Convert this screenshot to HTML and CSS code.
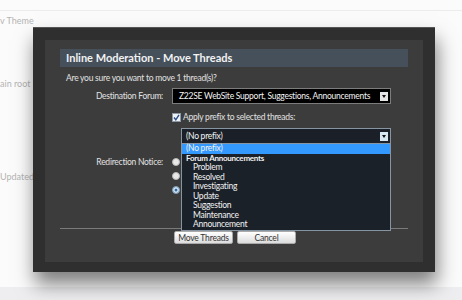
FILE: index.html
```html
<!DOCTYPE html>
<html lang="en">
<head>
    <meta charset="UTF-8">
    <title>Inline Moderation - Move Threads</title>
    <link rel="stylesheet" href="styles.css">
</head>
<body>
    <!-- Page behind the overlay -->
    <div class="page">
        <div class="page-head"></div>
        <div class="page-row theme">v Theme</div>
        <div class="page-row root">ain root</div>
        <div class="page-row updated">Updated:</div>
        <div class="page-foot"></div>
    </div>

    <!-- Move threads dialog -->
    <div class="overlay">
        <div class="panel">
            <h2 class="title">Inline Moderation - Move Threads</h2>
            <p class="question">Are you sure you want to move 1 thread(s)?</p>

            <div class="field">
                <label class="field-label">Destination Forum:</label>
                <div class="select select-dest">
                    <span class="select-text">Z22SE WebSite Support, Suggestions, Announcements</span>
                    <span class="arrow"></span>
                </div>
            </div>

            <div class="field field-check">
                <span></span>
                <label class="check">
                    <svg class="box" width="9" height="9" viewBox="0 0 9 9">
                        <rect x="0.5" y="0.5" width="8" height="8" fill="#eef2f6" stroke="#8d9aa6"/>
                        <path d="M2 4.5 L3.8 6.8 L7 1.8" fill="none" stroke="#2c4f8c" stroke-width="1.4"/>
                    </svg>
                    Apply prefix to selected threads:
                </label>
            </div>

            <div class="field field-prefix">
                <span></span>
                <div class="select select-prefix">
                    <span class="select-text">(No prefix)</span>
                    <span class="arrow arrow-open"></span>
                    <ul class="options">
                        <li class="selected">(No prefix)</li>
                        <li class="group">Forum Announcements</li>
                        <li class="sub">Problem</li>
                        <li class="sub">Resolved</li>
                        <li class="sub">Investigating</li>
                        <li class="sub">Update</li>
                        <li class="sub">Suggestion</li>
                        <li class="sub">Maintenance</li>
                        <li class="sub">Announcement</li>
                    </ul>
                </div>
            </div>

            <div class="field field-radio">
                <label class="field-label">Redirection Notice:</label>
                <div class="radios">
                    <span class="radio"></span>
                    <span class="radio"></span>
                    <span class="radio checked"></span>
                </div>
            </div>

            <div class="actions">
                <button type="submit">Move Threads</button>
                <button type="button">Cancel</button>
            </div>
        </div>
    </div>
</body>
</html>
```

FILE: styles.css
```css
 body {
     margin: 0;
     font-family: Lato, "Liberation Sans", sans-serif;
     background-color: #fbfbfb;
     height: 300px;
     overflow: hidden;
 }
 /* Page behind the dialog */
 .page {
     position: relative;
     height: 300px;
 }
 .page-head {
     height: 10px;
     border-bottom: 1px solid #ececec;
 }
 .page-row {
     color: #b4b4b4;
     font-size: 9px;
     line-height: 12px;
 }
 .theme {
     margin-top: 4px;
 }
 .root {
     margin-top: 51px;
 }
 .updated {
     margin-top: 81px;
 }
 .page-foot {
     position: absolute;
     left: 0;
     right: 0;
     bottom: 0;
     height: 13px;
     background-color: #eeeef0;
 }
 /* Dialog */
 .overlay {
     position: absolute;
     left: 33px;
     top: 27px;
     width: 378px;
     height: 221px;
     padding: 12px 12px 11px 12px;
     background-color: #2f2f2f;
     border-top: 1px solid #555;
     box-shadow: 2px 12px 18px rgba(0,0,0,0.5);
 }
 .panel {
     height: 222px;
     background-color: #3c3c3c;
     padding: 9px 15px 0 15px;
     box-sizing: border-box;
     color: #e2e2e2;
     font-size: 8.5px;
     letter-spacing: -0.25px;
 }
 .title {
     margin: 0;
     height: 18px;
     line-height: 18px;
     padding-left: 6px;
     background-color: #45505a;
     color: #f2f2f2;
     font-size: 11px;
     font-weight: bold;
     letter-spacing: 0;
 }
 .question {
     margin: 6px 0 0 6px;
     line-height: 10px;
 }
 .field {
     display: grid;
     grid-template-columns: 103px 1fr;
     column-gap: 9px;
     align-items: center;
     margin-top: 5px;
 }
 .field-label {
     text-align: right;
 }
 .select {
     position: relative;
     height: 16px;
     box-sizing: border-box;
     border: 1px solid #7c7c7c;
     background-color: #000;
     color: #f4f4f4;
     line-height: 14px;
     padding-left: 6px;
     white-space: nowrap;
 }
 .select-dest {
     width: 219px;
 }
 .arrow {
     position: absolute;
     right: 2px;
     top: 3px;
     width: 8px;
     height: 9px;
     background-color: #e4e4e4;
 }
 .arrow:after {
     content: "";
     position: absolute;
     left: 2px;
     top: 3px;
     border-left: 2px solid transparent;
     border-right: 2px solid transparent;
     border-top: 3px solid #111;
 }
 .arrow-open {
     background-color: #d6e6f2;
 }
 .field-check {
     margin-top: 8px;
 }
 .check {
     display: flex;
     align-items: center;
     gap: 2px;
     line-height: 10px;
 }
 .field-prefix {
     margin-top: 6px;
 }
 .select-prefix {
     margin-left: 9px;
     width: 210px;
     background-color: #1b2028;
     border-color: #8795a2;
     padding-left: 4px;
 }
 .options {
     position: absolute;
     left: -1px;
     top: 14px;
     width: 210px;
     margin: 0;
     padding: 0;
     list-style: none;
     background-color: #1b2129;
     border: 1px solid #8795a2;
     box-sizing: border-box;
     z-index: 2;
 }
 .options li {
     height: 9.5px;
     line-height: 9.5px;
     padding-left: 4px;
     color: #f2f2f2;
 }
 .options .selected {
     background-color: #3399ff;
 }
 .options .group {
     font-weight: bold;
     font-size: 8px;
 }
 .options .sub {
     padding-left: 11px;
 }
 .field-radio {
     margin-top: 14px;
     align-items: start;
 }
 .field-radio .field-label {
     line-height: 8px;
 }
 .radios {
     display: flex;
     flex-direction: column;
     gap: 6px;
 }
 .radio {
     width: 8px;
     height: 8px;
     border-radius: 50%;
     background-color: #e8e8e8;
     box-sizing: border-box;
     border: 1px solid #b8b8b8;
 }
 .radio.checked {
     background-color: #dfe9f2;
     border-color: #7d97b0;
     box-shadow: inset 0 0 0 1.5px #dfe9f2, inset 0 0 0 4px #2d6fb0;
 }
 .actions {
     margin-top: 34px;
     border-top: 1px solid #7a7a7a;
     padding: 2px 0 0 114px;
     display: flex;
     gap: 4px;
 }
 button {
     height: 13px;
     width: 59px;
     padding: 0;
     font-family: Lato, "Liberation Sans", sans-serif;
     font-size: 8.5px;
     letter-spacing: -0.2px;
     color: #333;
     border: 1px solid #aaa;
     border-radius: 2px;
     background: linear-gradient(#ffffff, #dcdcdc);
 }
```
